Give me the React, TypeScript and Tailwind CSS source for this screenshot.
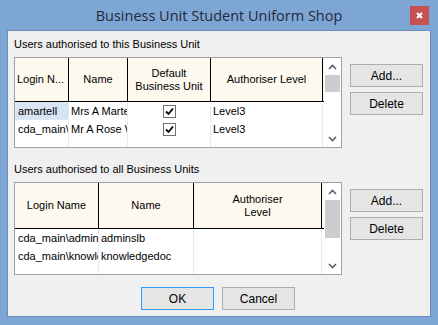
import React from 'react';

/* ─── small drawings ─── */
const Chevron: React.FC<{ down?: boolean }> = ({ down }) => (
  <svg width="9" height="6" viewBox="0 0 9 6" className={down ? 'rotate-180' : ''}>
    <path d="M1 5 L4.5 1.5 L8 5" fill="none" stroke="#606060" strokeWidth="1.6" />
  </svg>
);

const Check: React.FC = () => (
  <div className="w-[13px] h-[13px] border border-[#707070] bg-white flex items-center justify-center">
    <svg width="9" height="9" viewBox="0 0 9 9">
      <path d="M1 4.5 L3.5 7 L8 1.5" fill="none" stroke="#000" strokeWidth="1.8" />
    </svg>
  </div>
);

/* ─── scrollbar column ─── */
const ScrollBar: React.FC<{ thumbTop: number; thumbH: number }> = ({ thumbTop, thumbH }) => (
  <div className="w-[17px] flex flex-col bg-white">
    <div className="h-[17px] flex items-center justify-center">
      <Chevron />
    </div>
    <div className="flex-1 px-[1px]">
      <div className="bg-[#cdcdcd]" style={{ marginTop: thumbTop, height: thumbH }} />
    </div>
    <div className="h-[17px] flex items-center justify-center">
      <Chevron down />
    </div>
  </div>
);

/* ─── button ─── */
const Btn: React.FC<{ label: string; w?: string; focus?: boolean }> = ({ label, w = 'w-[73px]', focus }) => (
  <div
    className={`${w} h-[23px] flex items-center justify-center bg-[#e5e5e5] border ${
      focus ? 'border-[#3399ff]' : 'border-[#adadad]'
    } text-[12px] text-black`}
  >
    {label}
  </div>
);

const HeadCell: React.FC<{ w: string; children: React.ReactNode; left?: boolean }> = ({ w, children, left }) => (
  <div
    className={`${w} shrink-0 border-r border-black flex items-center ${
      left ? 'justify-start pl-[2px]' : 'justify-center text-center'
    } leading-[13px] overflow-hidden whitespace-nowrap`}
  >
    {children}
  </div>
);

const Cell: React.FC<{ w: string; children?: React.ReactNode; center?: boolean; sel?: boolean }> = ({
  w,
  children,
  center,
  sel,
}) => (
  <div
    className={`${w} shrink-0 h-full border-r border-[#e2ebf6] flex items-center overflow-hidden whitespace-nowrap ${
      center ? 'justify-center' : 'pl-[2px]'
    } ${sel ? 'bg-[#d8e4f2] border border-dotted border-[#333]' : ''}`}
  >
    {children}
  </div>
);

export default function App() {
  return (
    <div className="w-[438px] h-[325px] bg-[#7ea6d4] flex flex-col font-['Liberation_Sans',Arial,sans-serif] text-[11px] text-black">
      {/* title bar */}
      <div className="h-[30px] relative flex items-center justify-center">
        <span className="font-['Open_Sans',sans-serif] text-[14.5px] text-[#1e2a38] pt-[1px]">
          Business Unit Student Uniform Shop
        </span>
        <div className="absolute left-[410px] top-[6px] w-[19px] h-[19px] bg-[#c75050] flex items-center justify-center">
          <svg width="7" height="7" viewBox="0 0 7 7">
            <path d="M1 1 L6 6 M6 1 L1 6" stroke="#fff" strokeWidth="2" />
          </svg>
        </div>
      </div>

      {/* client */}
      <div className="mx-[7px] h-[287px] border border-[#6c8dba] bg-[#f0f0f0] flex flex-col">
        <div className="pl-[6px] flex flex-col">
          <div className="h-[26px] flex items-center">Users authorised to this Business Unit</div>

          <div className="flex">
            <div className="w-[328px] h-[91px] border border-[#a0a0a0] flex">
              <div className="flex-1 flex flex-col">
                <div className="h-[44px] flex bg-[#fdf9ee] border-b border-black">
                  <HeadCell w="w-[54px]" left>Login N...</HeadCell>
                  <HeadCell w="w-[59px]">Name</HeadCell>
                  <HeadCell w="w-[83px]">
                    Default
                    <br />
                    Business Unit
                  </HeadCell>
                  <HeadCell w="w-[112px]">Authoriser Level</HeadCell>
                </div>
                <div className="flex-1 bg-white flex flex-col">
                  <div className="h-[18px] flex">
                    <Cell w="w-[54px]" sel>amartell</Cell>
                    <Cell w="w-[59px]">Mrs A Martell</Cell>
                    <Cell w="w-[83px]" center>
                      <Check />
                    </Cell>
                    <Cell w="w-[112px]">Level3</Cell>
                  </div>
                  <div className="h-[18px] flex">
                    <Cell w="w-[54px]">
                      <span className="pl-[1px]">cda_main\arose</span>
                    </Cell>
                    <Cell w="w-[59px]">Mr A Rose Wilson</Cell>
                    <Cell w="w-[83px]" center>
                      <Check />
                    </Cell>
                    <Cell w="w-[112px]">Level3</Cell>
                  </div>
                  <div className="flex-1 flex">
                    <Cell w="w-[54px]" />
                    <Cell w="w-[59px]" />
                    <Cell w="w-[83px]" />
                    <Cell w="w-[112px]" />
                  </div>
                </div>
              </div>
              <ScrollBar thumbTop={0} thumbH={17} />
            </div>

            <div className="ml-[8px] pt-[7px] flex flex-col gap-[5px]">
              <Btn label="Add..." />
              <Btn label="Delete" />
            </div>
          </div>

          <div className="h-[34px] pt-[15px] leading-[13px]">Users authorised to all Business Units</div>

          <div className="flex">
            <div className="w-[328px] h-[93px] border border-[#a0a0a0] flex">
              <div className="flex-1 flex flex-col">
                <div className="h-[46px] flex bg-[#fdf9ee] border-b border-black">
                  <HeadCell w="w-[84px]">Login Name</HeadCell>
                  <HeadCell w="w-[95px]">Name</HeadCell>
                  <HeadCell w="w-[128px]">
                    Authoriser
                    <br />
                    Level
                  </HeadCell>
                </div>
                <div className="flex-1 bg-white flex flex-col">
                  <div className="h-[18px] flex">
                    <Cell w="w-[84px]">
                      <span className="pl-[1px]">cda_main\adminslb</span>
                    </Cell>
                    <Cell w="w-[95px]">adminslb</Cell>
                    <Cell w="w-[128px]" />
                  </div>
                  <div className="h-[18px] flex">
                    <Cell w="w-[84px]">
                      <span className="pl-[1px]">cda_main\knowledgedoc</span>
                    </Cell>
                    <Cell w="w-[95px]">knowledgedoc</Cell>
                    <Cell w="w-[128px]" />
                  </div>
                  <div className="flex-1 flex">
                    <Cell w="w-[84px]" />
                    <Cell w="w-[95px]" />
                    <Cell w="w-[128px]" />
                  </div>
                </div>
              </div>
              <ScrollBar thumbTop={0} thumbH={38} />
            </div>

            <div className="ml-[8px] pt-[7px] flex flex-col gap-[5px]">
              <Btn label="Add..." />
              <Btn label="Delete" />
            </div>
          </div>
        </div>

        <div className="mt-[12px] flex justify-center gap-[8px] pr-[2px]">
          <Btn label="OK" focus />
          <Btn label="Cancel" />
        </div>
      </div>
    </div>
  );
}
